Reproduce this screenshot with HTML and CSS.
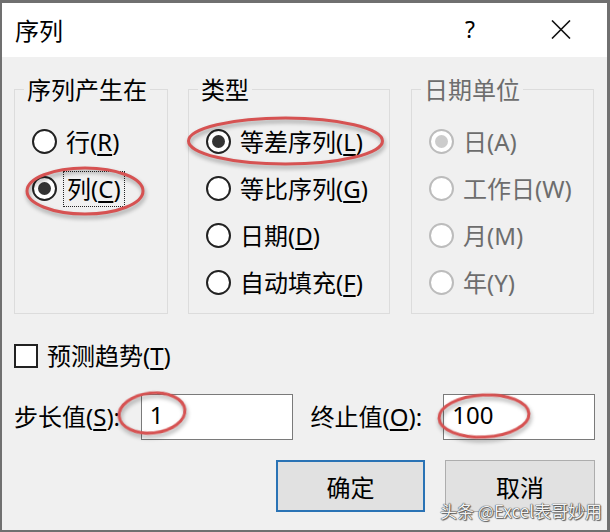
FILE: index.html
```html
<!DOCTYPE html>
<html lang="zh-CN">
<head>
<meta charset="utf-8">
<title>序列</title>
<link rel="stylesheet" href="styles.css">
</head>
<body>
<div class="dialog">
  <div class="titlebar">
    <span class="title">序列</span>
    <span class="help">?</span>
    <svg class="close" width="20" height="19" viewBox="0 0 20 19"><path d="M1 0.5 L19 18.5 M19 0.5 L1 18.5" stroke="#111" stroke-width="1.6" fill="none"/></svg>
  </div>
  <div class="content">
    <div class="groups">
      <div class="group g1">
        <div class="legend">序列产生在</div>
        <div class="rows">
          <div class="row"><span class="radio"></span><span class="label">行(<u>R</u>)</span></div>
          <div class="row"><span class="radio checked"></span><span class="label focus">列(<u>C</u>)</span></div>
        </div>
      </div>
      <div class="group g2">
        <div class="legend">类型</div>
        <div class="rows">
          <div class="row"><span class="radio checked"></span><span class="label">等差序列(<u>L</u>)</span></div>
          <div class="row"><span class="radio"></span><span class="label">等比序列(<u>G</u>)</span></div>
          <div class="row"><span class="radio"></span><span class="label">日期(<u>D</u>)</span></div>
          <div class="row"><span class="radio"></span><span class="label">自动填充(<u>F</u>)</span></div>
        </div>
      </div>
      <div class="group g3 disabled">
        <div class="legend">日期单位</div>
        <div class="rows">
          <div class="row"><span class="radio checked"></span><span class="label">日(A)</span></div>
          <div class="row"><span class="radio"></span><span class="label">工作日(W)</span></div>
          <div class="row"><span class="radio"></span><span class="label">月(M)</span></div>
          <div class="row"><span class="radio"></span><span class="label">年(Y)</span></div>
        </div>
      </div>
    </div>
    <div class="checkrow"><span class="checkbox"></span><span class="label">预测趋势(<u>T</u>)</span></div>
    <div class="inputrow">
      <span class="flabel f1">步长值(<u>S</u>):</span>
      <div class="input">1</div>
      <span class="flabel f2">终止值(<u>O</u>):</span>
      <div class="input">100</div>
    </div>
    <div class="buttons">
      <div class="btn default">确定</div>
      <div class="btn">取消</div>
    </div>
  </div>
  <svg class="marks" width="610" height="532" viewBox="0 0 610 532">
    <g fill="none" stroke="#d65252" stroke-width="3" class="ell">
      <ellipse cx="85" cy="191" rx="58" ry="23"/>
      <ellipse cx="285.5" cy="141" rx="97" ry="23"/>
      <ellipse cx="152" cy="413" rx="33" ry="20" transform="rotate(-6 152 413)"/>
      <ellipse cx="484" cy="416" rx="45" ry="21" transform="rotate(-3 484 416)"/>
    </g>
  </svg>
  <div class="watermark">头条 @Excel表哥妙用</div>
</div>
</body>
</html>
```
FILE: styles.css
```css
* { box-sizing: border-box; }
html, body { margin: 0; padding: 0; }
body {
  width: 610px;
  height: 532px;
  overflow: hidden;
  font-family: "Noto Sans", "Noto Sans CJK SC", sans-serif;
  color: #000;
}
.dialog {
  position: relative;
  width: 610px;
  height: 532px;
  border-style: solid;
  border-color: #707070;
  border-width: 3px 3px 2px 2px;
  display: flex;
  flex-direction: column;
  background: #f0f0f0;
}
.titlebar {
  height: 54px;
  background: #fff;
  display: flex;
  align-items: center;
  padding-left: 13px;
  flex: none;
}
.title {
  font-family: "Noto Sans CJK SC", sans-serif;
  font-size: 24px;
  line-height: 28px;
  flex: 1;
}
.help {
  font-family: "Noto Sans", sans-serif;
  font-size: 23px;
  line-height: 28px;
  margin-right: 76px;
  margin-top: -2px;
}
.close {
  display: block;
  margin-right: 36px;
  margin-top: -2px;
}
.content {
  flex: 1;
  padding: 20px 12px 0 12px;
  display: flex;
  flex-direction: column;
}
.groups {
  display: flex;
  gap: 20px;
  flex: none;
}
.group {
  margin-top: 12px;
  height: 225px;
  border: 1px solid #dcdcdc;
  display: flex;
  flex-direction: column;
}
.g1 { width: 154px; }
.g2 { width: 202px; }
.g3 { width: 183px; margin-left: 1px; }
.legend {
  align-self: flex-start;
  margin: -13px 0 0 9px;
  padding: 0 3px;
  background: #f0f0f0;
  font-size: 24px;
  line-height: 24px;
  font-family: "Noto Sans CJK SC", sans-serif;
}
.rows {
  margin-top: 17px;
  padding-left: 17px;
  display: flex;
  flex-direction: column;
}
.row {
  height: 47px;
  display: flex;
  align-items: center;
}
.label {
  font-size: 24px;
  line-height: 30px;
  white-space: nowrap;
}
.row .label { margin-left: 9px; }
u { text-decoration-thickness: 1.5px; text-underline-offset: 3px; }
.radio {
  width: 25px;
  height: 25px;
  border-radius: 50%;
  border: 2px solid #222;
  background: #fff;
  flex: none;
  display: flex;
  align-items: center;
  justify-content: center;
}
.radio.checked::after {
  content: "";
  width: 13px;
  height: 13px;
  border-radius: 50%;
  background: #333;
}
.disabled .legend, .disabled .label { color: #6d6d6d; }
.disabled .radio { border-color: #bcbcbc; }
.disabled .radio.checked::after { background: #cccccc; }
.focus {
  outline: 1px dotted #222;
  outline-offset: 2px;
  padding: 0 1px;
}
.checkrow {
  margin-top: 27px;
  height: 30px;
  display: flex;
  align-items: center;
}
.checkbox {
  width: 24px;
  height: 24px;
  border: 2px solid #222;
  background: #fff;
  flex: none;
}
.checkrow .label { margin-left: 9px; }
.inputrow {
  margin-top: 23px;
  height: 46px;
  display: flex;
  align-items: center;
}
.flabel {
  font-size: 24px;
  line-height: 30px;
  white-space: nowrap;
}
.f1 { width: 127px; }
.f2 { width: 133px; margin-left: 18px; }
.input {
  width: 152px;
  height: 46px;
  border: 1px solid #7a7a7a;
  background: #fff;
  font-size: 24px;
  line-height: 40px;
  padding-left: 8px;
}
.buttons {
  margin-top: 20px;
  display: flex;
  justify-content: flex-end;
  gap: 20px;
}
.btn {
  width: 150px;
  height: 52px;
  background: #e1e1e1;
  border: 1px solid #adadad;
  display: flex;
  align-items: center;
  justify-content: center;
  font-family: "Noto Sans CJK SC", sans-serif;
  font-size: 24px;
}
.btn.default {
  width: 149px;
  border: 2px solid #2a73b5;
}
.marks {
  position: absolute;
  left: -2px;
  top: -3px;
  pointer-events: none;
}
.ell { filter: drop-shadow(1px 3px 2px rgba(0,0,0,0.35)); }
.watermark {
  position: absolute;
  left: 438px;
  top: 498px;
  font-family: "Noto Sans CJK SC", sans-serif;
  font-size: 17px;
  line-height: 20px;
  color: #f2f2f2;
  text-shadow: 0 0 1px #333, 0 0 1px #333, 1px 1px 1px #666;
  white-space: nowrap;
}
```
